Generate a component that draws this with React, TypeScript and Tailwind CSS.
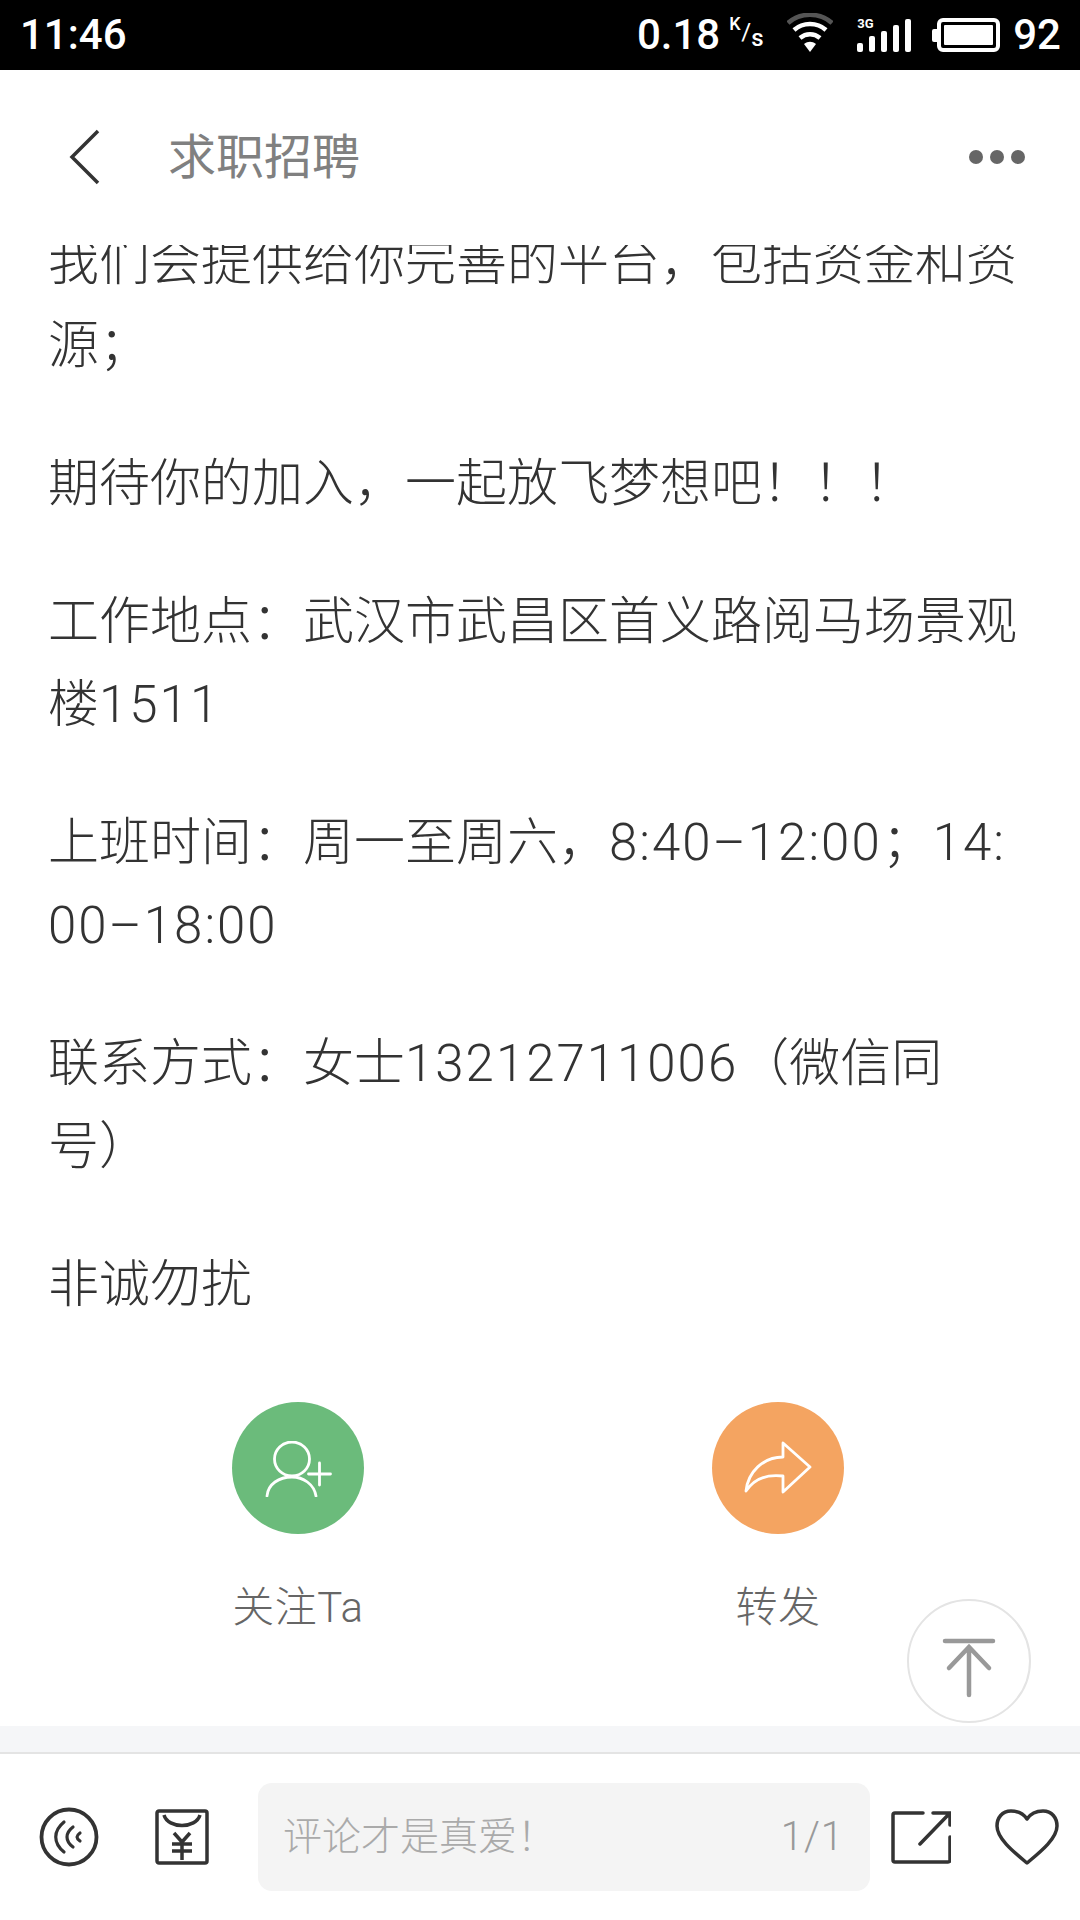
const FONT = "font-['Roboto','Noto_Sans_CJK_SC',sans-serif]";

// Status bar glyphs

function WifiIcon() {
  return (
    <svg width="46" height="40" viewBox="0 0 46 40" fill="none" strokeWidth="4.5">
      <path d="M1 10 C13 -1 33 -1 45 10" stroke="#555" />
      <path d="M7 17 C16 9 30 9 39 17" stroke="#fff" />
      <path d="M13 25 C19 20 27 20 33 25" stroke="#fff" />
      <path d="M17 31 L23 39 L29 31 C25 28 21 28 17 31 Z" fill="#fff" />
    </svg>
  );
}

function SignalIcon() {
  const bars = [9, 16, 21, 27, 33];
  return (
    <div className="relative flex items-end gap-[6px] h-[34px]">
      <span className="absolute left-0 top-0 text-white text-[13px] leading-[12px] font-bold">3G</span>
      {bars.map((h, i) => (
        <div key={i} className="w-[6px] bg-white rounded-[2px]" style={{ height: h }} />
      ))}
    </div>
  );
}

function BatteryIcon() {
  return (
    <div className="flex items-center">
      <div className="w-[5px] h-[13px] bg-white rounded-l-[2px]" />
      <div className="w-[63px] h-[34px] border-[4px] border-white rounded-[6px] p-[3px]">
        <div className="w-full h-full bg-white rounded-[1px]" />
      </div>
    </div>
  );
}

function StatusBar() {
  return (
    <div className={`h-[70px] bg-black text-white flex items-center justify-between pl-[20px] pr-[19px] shrink-0 ${FONT}`}>
      <span className="text-[42px] leading-[66px] font-medium">11:46</span>
      <div className="flex items-center">
        <span className="text-[42px] leading-[66px] font-medium">0.18</span>
        <span className="relative w-[36px] h-[34px] ml-[9px] font-medium">
          <span className="absolute left-0 top-[-3px] text-[18px] leading-[18px]">K</span>
          <span className="absolute left-[12px] top-[2px] text-[24px] leading-[24px] font-normal">/</span>
          <span className="absolute left-[22px] top-[8px] text-[24px] leading-[24px]">s</span>
        </span>
        <span className="ml-[22px] mt-[-4px] flex"><WifiIcon /></span>
        <span className="ml-[24px] flex"><SignalIcon /></span>
        <span className="ml-[21px] flex"><BatteryIcon /></span>
        <span className="ml-[13px] text-[42px] leading-[66px] font-medium">92</span>
      </div>
    </div>
  );
}

function Header() {
  return (
    <div className={`h-[175px] flex items-center pl-[69px] pr-[55px] shrink-0 ${FONT}`}>
      <svg width="32" height="56" viewBox="0 0 32 56" fill="none" className="mt-[-1px]">
        <path d="M29 2 L3 28 L29 54" stroke="#333" strokeWidth="3.5" />
      </svg>
      <span className="ml-[67px] text-[48px] leading-[60px] text-[#808080]">求职招聘</span>
      <div className="ml-auto flex gap-[7px] mt-[-2px]">
        <div className="w-[14px] h-[14px] rounded-full bg-[#666]" />
        <div className="w-[14px] h-[14px] rounded-full bg-[#666]" />
        <div className="w-[14px] h-[14px] rounded-full bg-[#666]" />
      </div>
    </div>
  );
}

function Paragraph({ children }: { children: React.ReactNode }) {
  return <p className="mb-[55px] break-all">{children}</p>;
}

// Latin runs in the reference sit wider than Roboto's own spacing
function Num({ children }: { children: React.ReactNode }) {
  return <span className="tracking-[2px]">{children}</span>;
}

function Article() {
  return (
    <div className={`pl-[48px] pr-[62px] -mt-[24px] text-[51px] leading-[83px] text-[#333] font-light ${FONT}`}>
      <Paragraph>我们会提供给你完善的平台，包括资金和资源；</Paragraph>
      <Paragraph>期待你的加入，一起放飞梦想吧！！！</Paragraph>
      <Paragraph>工作地点：武汉市武昌区首义路阅马场景观楼<Num>1511</Num></Paragraph>
      <Paragraph>上班时间：周一至周六，<Num>8:40–12:00</Num>；<Num>14:00–18:00</Num></Paragraph>
      <Paragraph>联系方式：女士<Num>13212711006</Num>（微信同号）</Paragraph>
      <Paragraph>非诚勿扰</Paragraph>
    </div>
  );
}

function ActionButton({ color, label, icon }: { color: string; label: string; icon: React.ReactNode }) {
  return (
    <div className="w-[200px] flex flex-col items-center">
      <div className={`w-[132px] h-[132px] rounded-full flex items-center justify-center ${color}`}>{icon}</div>
      <span className="mt-[49px] text-[42px] leading-[50px] text-[#666] font-light tracking-[0.5px]">{label}</span>
    </div>
  );
}

function Actions() {
  return (
    <div className={`flex justify-between mt-[76px] pl-[198px] pr-[202px] ${FONT}`}>
      <ActionButton
        color="bg-[#6bbb7b]"
        label="关注Ta"
        icon={
          <svg width="68" height="56" viewBox="0 0 68 56" fill="none" stroke="#fff" strokeWidth="2.8" strokeLinecap="round" className="mt-[2px]">
            <ellipse cx="28" cy="18" rx="17.5" ry="17" />
            <path d="M3 55 C4 43 15 36 28 36 C39 36 50 43 52 55" />
            <path d="M55.5 22 V44 M44.5 33 H66.5" />
          </svg>
        }
      />
      <ActionButton
        color="bg-[#f4a461]"
        label="转发"
        icon={
          <svg width="68" height="54" viewBox="0 0 68 54" fill="none" stroke="#fff" strokeWidth="2.8" strokeLinejoin="round" strokeLinecap="round">
            <path d="M39 2 L66 26 L39 51 V35 C23 33 10 38 2 50 C4 31 19 16 39 16 Z" />
          </svg>
        }
      />
    </div>
  );
}

function BottomBar() {
  return (
    <div className={`h-[168px] shrink-0 flex items-center bg-white border-t-2 border-[#e4e4e4] ${FONT}`}>
      <svg width="60" height="60" viewBox="0 0 60 60" fill="none" stroke="#333" strokeWidth="3.2" strokeLinecap="round" className="ml-[39px]">
        <circle cx="30" cy="30" r="27.5" strokeWidth="3.8" />
        <path d="M25 15 C14 24 14 36 25 45" />
        <path d="M34 20 C26 26 26 34 34 40" />
        <path d="M41 26 C37 29 37 31 41 34" />
      </svg>
      <svg width="54" height="56" viewBox="0 0 54 56" fill="none" stroke="#333" strokeWidth="3.5" className="ml-[56px]">
        <rect x="2" y="2" width="50" height="52" rx="2" />
        <path d="M9 6 C13 20 41 20 45 6" />
        <path d="M19 24 L27 33 L35 24 M17 35 H37 M17 42 H37 M27 33 V51" />
      </svg>
      <div className="ml-[49px] w-[612px] h-[108px] rounded-[14px] bg-[#f4f4f4] flex items-center justify-between pl-[25px] pr-[26px] font-light">
        <span className="text-[39px] text-[#aaa]">评论才是真爱！</span>
        <span className="text-[40px] text-[#999] tracking-[1px]">1/1</span>
      </div>
      <svg width="60" height="54" viewBox="0 0 60 54" fill="none" stroke="#333" strokeWidth="3.5" strokeLinecap="round" className="ml-[21px]">
        <path d="M32 3 H4 Q2 3 2 5 V50 Q2 52 4 52 H57 Q59 52 59 50 V27" />
        <path d="M29 34 L58 4 M42 3 H59 V15" />
      </svg>
      <svg width="64" height="56" viewBox="0 0 64 56" fill="none" stroke="#333" strokeWidth="3.5" strokeLinejoin="round" className="ml-[44px]">
        <path d="M32 10 C28 4 22 2 16 2 C7 2 2 9 2 17 C2 30 20 44 32 54 C44 44 62 30 62 17 C62 9 57 2 48 2 C42 2 36 4 32 10 Z" />
      </svg>
    </div>
  );
}

export default function App() {
  return (
    <div className="relative w-[1080px] h-[1920px] bg-white flex flex-col overflow-hidden">
      <StatusBar />
      <Header />
      <div className="flex-1 overflow-hidden">
        <Article />
        <Actions />
      </div>
      <div className="h-[26px] bg-[#f5f6f8] shrink-0" />
      <BottomBar />
      <div className="absolute left-[907px] top-[1599px] w-[124px] h-[124px] rounded-full border-2 border-[#e4e4e4] bg-white/60 flex items-center justify-center">
        <svg width="54" height="60" viewBox="0 0 54 60" fill="none" stroke="#999" strokeWidth="4.5" strokeLinecap="round" className="mt-[14px]">
          <path d="M3 3 H51" />
          <path d="M27 57 V9 M7 30 L27 9 L47 30" />
        </svg>
      </div>
    </div>
  );
}
